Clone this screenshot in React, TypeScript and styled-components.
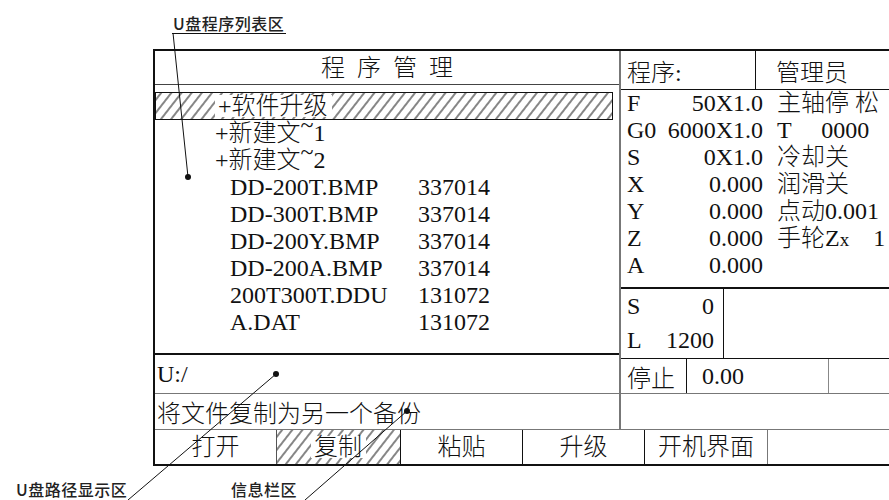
import { useId } from "react";
import styled, { createGlobalStyle } from "styled-components";

const GlobalStyle = createGlobalStyle`
  *, *::before, *::after { box-sizing: border-box; }
  html, body { margin: 0; padding: 0; background: #fff; overflow: hidden; }
  body {
    font-family: "Liberation Serif", "Noto Sans CJK SC", serif;
    font-weight: 300;
    color: #111;
  }
`;

const Page = styled.div`
  position: relative;
  width: 889px;
  height: 500px;
  overflow: hidden;
`;

const TopNote = styled.div`
  height: 49px;
  padding: 14px 0 0 172px;
`;

const NoteLabel = styled.span<{ $underline?: boolean }>`
  display: inline-block;
  font-family: "Noto Sans CJK SC", sans-serif;
  font-size: 16px;
  font-weight: 500;
  line-height: 18px;
  letter-spacing: 0.5px;
  color: #222;
  padding: 0 2px 1px 1px;
  border-bottom: ${({ $underline }) => ($underline ? "1px solid #111" : "none")};
`;

const Frame = styled.div`
  margin-left: 153px;
  width: 760px;
  border-top: 2px solid #111;
  border-left: 2px solid #111;
  font-size: 24px;
`;

const Main = styled.div`
  display: flex;
`;

const LeftPanel = styled.div`
  width: 464px;
  display: flex;
  flex-direction: column;
`;

const RightPanel = styled.div`
  flex: 1;
  border-left: 2px solid #777;
  display: flex;
  flex-direction: column;
`;

const Title = styled.div`
  height: 34px;
  border-bottom: 1px solid #444;
  display: flex;
  align-items: center;
  justify-content: center;
  word-spacing: 6px;
  line-height: 1;
`;

const FileList = styled.div`
  height: 270px;
  border-bottom: 2px solid #111;
  padding: 7px 6px 0 0;
`;

const Row = styled.div<{ $indent: number }>`
  height: 27px;
  line-height: 27px;
  padding-left: ${({ $indent }) => $indent}px;
  display: grid;
  grid-template-columns: 188px auto;
  white-space: pre;
`;

const Selected = styled.div`
  position: relative;
  height: 28px;
  border: 1px solid #111;
  padding-left: 59px;
  display: flex;
  align-items: center;
  overflow: hidden;
`;

const HatchSvg = styled.svg`
  position: absolute;
  left: 0;
  top: 0;
  width: 100%;
  height: 100%;
`;

const OnHatch = styled.span`
  position: relative;
  background: #fff;
  padding: 0 4px 0 3px;
  line-height: 22px;
  height: 22px;
`;

const Tilde = styled.span`
  vertical-align: 0.35em;
  line-height: 0;
`;

const Strip = styled.div<{ $h: number; $line: string }>`
  height: ${({ $h }) => $h}px;
  border-bottom: 1px solid ${({ $line }) => $line};
  display: flex;
  align-items: center;
  padding-left: 2px;
  white-space: pre;
`;

const CellRow = styled.div<{ $h: number; $line: string }>`
  height: ${({ $h }) => $h}px;
  border-bottom: 1px solid ${({ $line }) => $line};
  display: flex;
`;

const Cell = styled.div<{ $w?: number; $pad: number; $line?: string }>`
  ${({ $w }) => ($w ? `width: ${$w}px; flex: none;` : "flex: 1;")}
  padding-left: ${({ $pad }) => $pad}px;
  border-right: ${({ $line }) => ($line ? `1px solid ${$line}` : "none")};
  display: flex;
  align-items: center;
  white-space: pre;
`;

const Status = styled.div`
  height: 199px;
  border-bottom: 2px solid #111;
  padding-left: 6px;
  display: grid;
  grid-template-columns: 36px 100px 1fr;
  grid-auto-rows: 27px;
  align-items: center;
  line-height: 27px;
`;

const Value = styled.span`
  text-align: right;
  white-space: pre;
`;

const Extra = styled.span`
  padding-left: 14px;
  white-space: pre;
`;

const SpindleBox = styled.div`
  width: 103px;
  border-right: 1px solid #111;
  padding: 0 9px 0 6px;
  display: grid;
  grid-template-columns: auto 1fr;
  grid-auto-rows: 34px;
  align-items: center;
`;

const Small = styled.span`
  font-size: 19px;
`;

const ButtonBar = styled.div`
  display: flex;
  height: 36px;
  border-bottom: 2px solid #111;
`;

const SoftKey = styled.div<{ $w?: number; $line: string }>`
  position: relative;
  ${({ $w }) => ($w ? `width: ${$w}px; flex: none;` : "flex: 1;")}
  border-right: 1px solid ${({ $line }) => $line};
  display: flex;
  align-items: center;
  justify-content: center;
  overflow: hidden;
`;

const KeyLabel = styled.span`
  padding: 0 3px;
  line-height: 28px;
`;

const BottomNotes = styled.div`
  margin-top: 14px;
  padding-left: 15px;
  display: grid;
  grid-template-columns: 215px auto;
`;

const Leaders = styled.svg`
  position: absolute;
  left: 0;
  top: 0;
  pointer-events: none;
`;

function Hatch() {
  const id = useId().replace(/:/g, "");
  return (
    <HatchSvg aria-hidden>
      <defs>
        <pattern
          id={id}
          width={8}
          height={8}
          patternUnits="userSpaceOnUse"
          patternTransform="rotate(38)"
        >
          <line x1={4} y1={-1} x2={4} y2={9} stroke="#222" strokeWidth={1.1} />
        </pattern>
      </defs>
      <rect width="100%" height="100%" fill={`url(#${id})`} />
    </HatchSvg>
  );
}

const files = [
  ["DD-200T.BMP", "337014"],
  ["DD-300T.BMP", "337014"],
  ["DD-200Y.BMP", "337014"],
  ["DD-200A.BMP", "337014"],
  ["200T300T.DDU", "131072"],
  ["A.DAT", "131072"],
];

const status = [
  ["F", "50X1.0", "主轴停 松"],
  ["G0", "6000X1.0", "T     0000"],
  ["S", "0X1.0", "冷却关"],
  ["X", "0.000", "润滑关"],
  ["Y", "0.000", "点动0.001"],
  ["Z", "0.000", "手轮"],
  ["A", "0.000", ""],
];

const keys = [
  { label: "打开", w: 122, line: "#555" },
  { label: "复制", w: 124, line: "#111", hatched: true },
  { label: "粘贴", w: 122, line: "#111" },
  { label: "升级", w: 122, line: "#111" },
  { label: "开机界面", w: 123, line: "#777" },
  { label: "", line: "#777" },
];

export default function App() {
  return (
    <Page>
      <GlobalStyle />
      <TopNote>
        <NoteLabel $underline>U盘程序列表区</NoteLabel>
      </TopNote>

      <Frame>
        <Main>
          <LeftPanel>
            <Title>程 序 管 理</Title>
            <FileList>
              <Selected>
                <Hatch />
                <OnHatch>+软件升级</OnHatch>
              </Selected>
              <Row $indent={60}>
                <span>
                  +新建文<Tilde>~</Tilde>1
                </span>
              </Row>
              <Row $indent={60}>
                <span>
                  +新建文<Tilde>~</Tilde>2
                </span>
              </Row>
              {files.map(([name, size]) => (
                <Row key={name} $indent={75}>
                  <span>{name}</span>
                  <span>{size}</span>
                </Row>
              ))}
            </FileList>
            <Strip $h={39} $line="#777">U:/</Strip>
            <Strip $h={36} $line="#777">将文件复制为另一个备份</Strip>
          </LeftPanel>

          <RightPanel>
            <CellRow $h={39} $line="#111">
              <Cell $w={135} $pad={6} $line="#111">
                程序:
              </Cell>
              <Cell $pad={20}>管理员</Cell>
            </CellRow>
            <Status>
              {status.map(([label, value, extra]) => (
                <>
                  <span key={label}>{label}</span>
                  <Value>{value}</Value>
                  <Extra>
                    {extra === "手轮" ? (
                      <>
                        手轮Z<Small>x</Small>
                        {"    1"}
                      </>
                    ) : (
                      extra
                    )}
                  </Extra>
                </>
              ))}
            </Status>
            <CellRow $h={70} $line="#111">
              <SpindleBox>
                <span>S</span>
                <Value>0</Value>
                <span>L</span>
                <Value>1200</Value>
              </SpindleBox>
            </CellRow>
            <CellRow $h={35} $line="#777">
              <Cell $w={66} $pad={6} $line="#111">
                停止
              </Cell>
              <Cell $w={142} $pad={15} $line="#888">
                0.00
              </Cell>
              <Cell $pad={0} />
            </CellRow>
            <Strip $h={36} $line="#777" />
          </RightPanel>
        </Main>

        <ButtonBar>
          {keys.map((k) => (
            <SoftKey key={k.label || "blank"} $w={k.w} $line={k.line}>
              {k.hatched && <Hatch />}
              {k.label &&
                (k.hatched ? (
                  <OnHatch>{k.label}</OnHatch>
                ) : (
                  <KeyLabel>{k.label}</KeyLabel>
                ))}
            </SoftKey>
          ))}
        </ButtonBar>
      </Frame>

      <BottomNotes>
        <NoteLabel>U盘路径显示区</NoteLabel>
        <NoteLabel>信息栏区</NoteLabel>
      </BottomNotes>

      <Leaders width={889} height={500} viewBox="0 0 889 500">
        <g stroke="#111" strokeWidth={1} fill="none">
          <line x1={173} y1={33} x2={188} y2={177} />
          <line x1={276} y1={374} x2={128} y2={500} />
          <line x1={407} y1={411} x2={305} y2={500} />
        </g>
        <g fill="#111">
          <circle cx={188} cy={177} r={3} />
          <circle cx={276} cy={374} r={3} />
          <circle cx={407} cy={411} r={3} />
        </g>
      </Leaders>
    </Page>
  );
}
